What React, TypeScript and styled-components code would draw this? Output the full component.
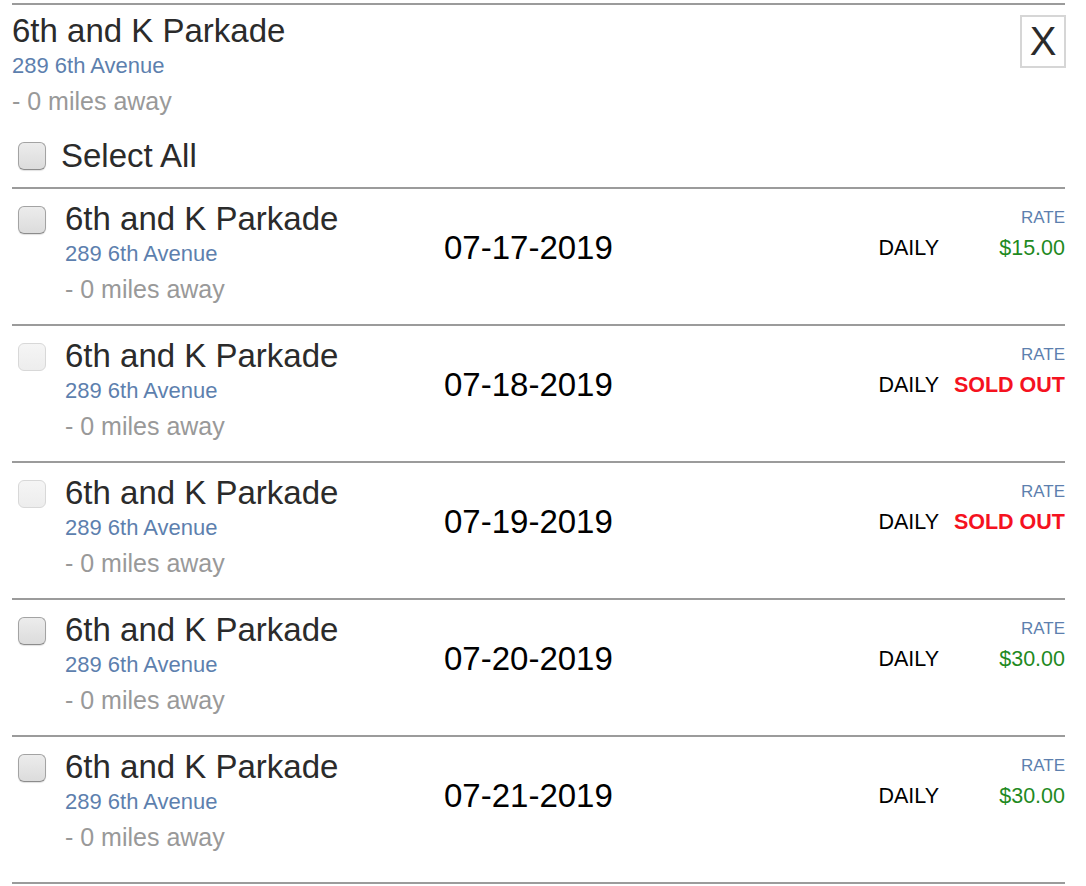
import styled, { createGlobalStyle } from 'styled-components'

const GlobalStyle = createGlobalStyle`
  html, body {
    margin: 0;
    padding: 0;
    background: #ffffff;
  }
  body {
    font-family: "Liberation Sans", Arial, Helvetica, sans-serif;
    color: #333333;
  }
`

interface Booking {
  date: string
  price: string | null
}

const bookings: Booking[] = [
  { date: '07-17-2019', price: '$15.00' },
  { date: '07-18-2019', price: null },
  { date: '07-19-2019', price: null },
  { date: '07-20-2019', price: '$30.00' },
  { date: '07-21-2019', price: '$30.00' },
]

function LotInfo() {
  return (
    <>
      <LotName>6th and K Parkade</LotName>
      <LotAddress>289 6th Avenue</LotAddress>
      <LotDistance>- 0 miles away</LotDistance>
    </>
  )
}

export default function App() {
  return (
    <>
      <GlobalStyle />
      <Panel>
        <Header>
          <HeaderInfo>
            <LotInfo />
          </HeaderInfo>
          <CloseButton type="button">X</CloseButton>
        </Header>
        <SelectAllRow>
          <Check type="checkbox" />
          <SelectAllLabel>Select All</SelectAllLabel>
        </SelectAllRow>
        <List>
          {bookings.map((b) => (
            <Row key={b.date}>
              <LeftCell>
                <Check type="checkbox" disabled={!b.price} $inRow />
                <div>
                  <LotInfo />
                </div>
              </LeftCell>
              <DateCell>{b.date}</DateCell>
              <RateCell>
                <RateLabel>RATE</RateLabel>
                <RateLine>
                  <RateType>DAILY</RateType>
                  {b.price ? <Price>{b.price}</Price> : <SoldOut>SOLD OUT</SoldOut>}
                </RateLine>
              </RateCell>
            </Row>
          ))}
        </List>
      </Panel>
    </>
  )
}

const Panel = styled.div`
  margin: 3px 21px 0 12px;
  border-top: 2px solid #9b9b9b;
`

const Header = styled.div`
  display: flex;
  justify-content: space-between;
  align-items: flex-start;
  padding-top: 8px;
`

const HeaderInfo = styled.div`
  display: flex;
  flex-direction: column;
`

const LotName = styled.div`
  font-size: 33px;
  line-height: 36px;
  color: #2b2b2b;
`

const LotAddress = styled.div`
  font-size: 22px;
  line-height: 34px;
  color: #5d7fae;
`

const LotDistance = styled.div`
  font-size: 25px;
  line-height: 36px;
  color: #999999;
`

const CloseButton = styled.button`
  width: 46px;
  height: 53px;
  margin-top: 2px;
  margin-right: -1px;
  padding: 0;
  border: 2px solid #d6d6d6;
  background: #ffffff;
  font-family: "Liberation Sans", Arial, sans-serif;
  font-size: 40px;
  line-height: 49px;
  color: #2b2b2b;
  cursor: pointer;
`

const SelectAllRow = styled.label`
  display: flex;
  align-items: center;
  gap: 15px;
  height: 40px;
  margin-top: 17px;
  margin-bottom: 11px;
  padding-left: 6px;
`

const SelectAllLabel = styled.span`
  font-size: 33px;
  color: #2b2b2b;
`

const Check = styled.input<{ $inRow?: boolean }>`
  appearance: none;
  -webkit-appearance: none;
  flex: none;
  width: 28px;
  height: 28px;
  margin: ${({ $inRow }) => ($inRow ? '5px 0 0 6px' : '0')};
  border: 1px solid #a3a3a3;
  border-bottom-color: #8c8c8c;
  border-radius: 6px;
  background: linear-gradient(#ececec, #dcdcdc);
  box-shadow: 0 1px 1px rgba(0, 0, 0, 0.12);

  &:disabled {
    border-color: #d8d8d8;
    background: linear-gradient(#f5f5f5, #ededed);
    box-shadow: none;
  }
`

const List = styled.div`
  padding-bottom: 10px;
  border-bottom: 2px solid #9b9b9b;
`

const Row = styled.div`
  display: grid;
  grid-template-columns: 432px 1fr auto;
  align-items: start;
  padding: 12px 0 17px;
  border-top: 2px solid #9b9b9b;
`

const LeftCell = styled.div`
  display: flex;
  gap: 19px;
`

const DateCell = styled.div`
  margin-top: 27px;
  font-size: 33px;
  line-height: 40px;
  color: #000000;
`

const RateCell = styled.div`
  display: flex;
  flex-direction: column;
  align-items: flex-end;
  margin-top: 7px;
`

const RateLabel = styled.div`
  font-size: 17px;
  line-height: 20px;
  color: #5d7fae;
`

const RateLine = styled.div`
  display: grid;
  grid-template-columns: auto 112px;
  column-gap: 14px;
  font-size: 21.5px;
  line-height: 40px;
`

const RateType = styled.span`
  color: #000000;
`

const Price = styled.span`
  text-align: right;
  color: #1f8a1f;
`

const SoldOut = styled.span`
  text-align: right;
  font-weight: 700;
  color: #f5121f;
`
